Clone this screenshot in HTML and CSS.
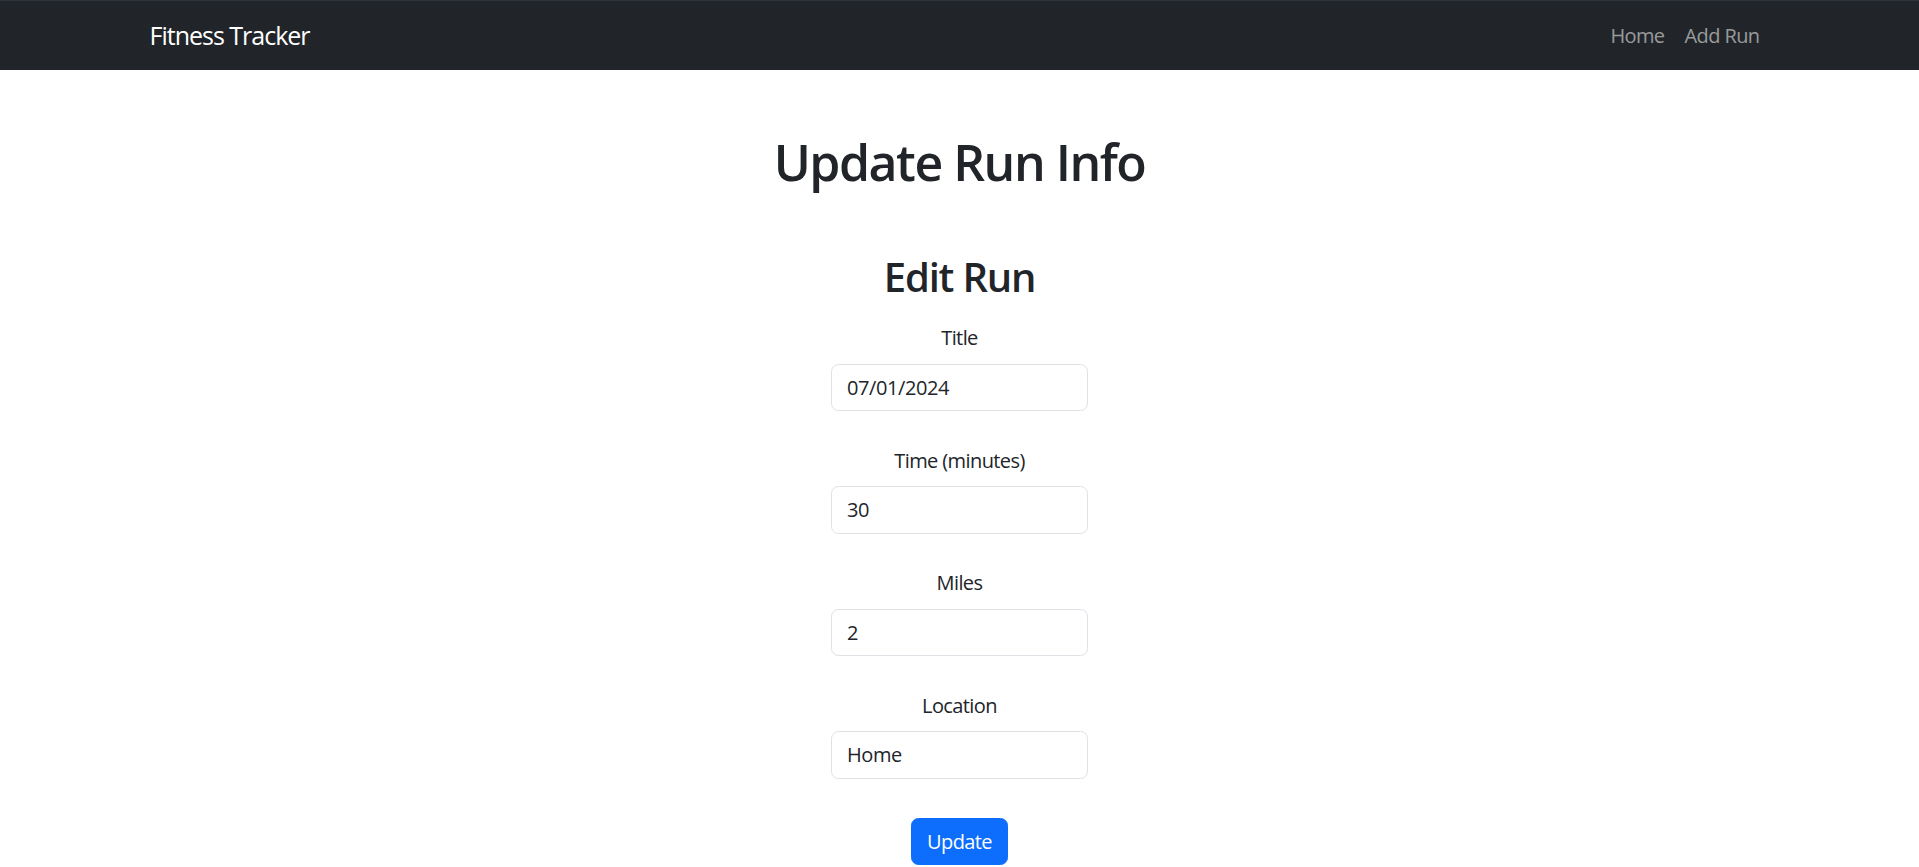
FILE: index.html
```html
<!DOCTYPE html>
<html lang="en">
<head>
<meta charset="utf-8">
<title>Fitness Tracker</title>
<link rel="stylesheet" href="styles.css">
</head>
<body>
<nav class="navbar">
  <div class="nav-inner">
    <a class="brand" href="#">Fitness Tracker</a>
    <ul class="nav-links">
      <li><a href="#">Home</a></li>
      <li><a href="#">Add Run</a></li>
    </ul>
  </div>
</nav>
<main class="page">
  <h1 class="page-title">Update Run Info</h1>
  <h2 class="form-title">Edit Run</h2>
  <form class="run-form">
    <div class="field">
      <label class="field-label" for="title">Title</label>
      <input class="field-input" id="title" type="text" value="07/01/2024">
    </div>
    <div class="field">
      <label class="field-label" for="time">Time (minutes)</label>
      <input class="field-input" id="time" type="text" value="30">
    </div>
    <div class="field">
      <label class="field-label" for="miles">Miles</label>
      <input class="field-input" id="miles" type="text" value="2">
    </div>
    <div class="field">
      <label class="field-label" for="location">Location</label>
      <input class="field-input" id="location" type="text" value="Home">
    </div>
    <button class="btn-primary" type="button">Update</button>
  </form>
</main>
</body>
</html>
```
FILE: styles.css
```css
* { box-sizing: border-box; }
html, body { margin: 0; padding: 0; }
body {
  font-family: "Open Sans", "Noto Sans", sans-serif;
  font-size: 20px;
  line-height: 30px;
  letter-spacing: -0.03em;
  color: #212529;
  background: #ffffff;
}
.navbar {
  background: #212529;
  border-top: 1px solid #2f353d;
  height: 70px;
}
.nav-inner {
  width: 1650px;
  margin: 0 auto;
  padding: 0 15px;
  height: 100%;
  display: flex;
  align-items: center;
  justify-content: space-between;
}
.brand {
  color: #ffffff;
  text-decoration: none;
  font-size: 25px;
  line-height: 37px;
  letter-spacing: -0.04em;
}
.nav-links {
  list-style: none;
  margin: 0;
  padding: 0;
  display: flex;
}
.nav-links a {
  display: block;
  padding: 0 10px;
  color: rgba(255, 255, 255, 0.55);
  text-decoration: none;
  font-size: 20px;
}
.page {
  text-align: center;
  padding-top: 62px;
}
.page-title {
  margin: 0;
  font-size: 50px;
  line-height: 60px;
  font-weight: 600;
  letter-spacing: -0.03em;
}
.form-title {
  margin: 61px 0 0;
  font-size: 40px;
  line-height: 48px;
  font-weight: 600;
  letter-spacing: -0.03em;
}
.run-form {
  margin-top: 22px;
  display: flex;
  flex-direction: column;
  align-items: center;
}
.field {
  display: flex;
  flex-direction: column;
  align-items: center;
  margin-bottom: 34.5px;
}
.field-label {
  line-height: 30px;
  margin-bottom: 10.5px;
}
.field-input {
  width: 257px;
  height: 47.5px;
  padding: 0 15px;
  border: 1px solid #dee2e6;
  border-radius: 7.5px;
  font-family: inherit;
  font-size: 20px;
  letter-spacing: -0.02em;
  color: #212529;
  background: #ffffff;
}
.btn-primary {
  margin-top: 5px;
  height: 47px;
  padding: 0 15px;
  border: 1px solid #0d6efd;
  border-radius: 7.5px;
  background: #0d6efd;
  color: #ffffff;
  font-family: inherit;
  font-size: 20px;
  letter-spacing: -0.03em;
}
```
